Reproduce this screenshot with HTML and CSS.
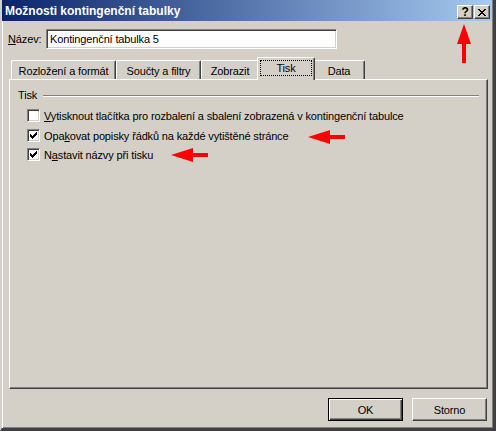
FILE: index.html
```html
<!DOCTYPE html>
<html lang="cs">
    <head>
        <meta charset="UTF-8">
        <meta name="viewport" content="width=device-width, initial-scale=1.0">
        <title>Možnosti kontingenční tabulky</title>
        <link rel="stylesheet" href="styles.css">
    </head>
    <body>

        <div class="window">
            <!-- Title Bar -->
            <div class="titlebar">
                <span class="title">Možnosti kontingenční tabulky</span>
                <div class="caption-buttons">
                    <div class="caption-btn help">?</div>
                    <div class="caption-btn close">
                        <svg width="8" height="7" viewBox="0 0 8 7" shape-rendering="crispEdges">
                            <path d="M0 0h2v1H0z M6 0h2v1H6z M1 1h2v1H1z M5 1h2v1H5z M2 2h4v1H2z M3 3h2v1H3z M2 4h4v1H2z M1 5h2v1H1z M5 5h2v1H5z M0 6h2v1H0z M6 6h2v1H6z" fill="#000"/>
                        </svg>
                    </div>
                </div>
            </div>

            <div class="content">
                <!-- Name -->
                <div class="name-row">
                    <span class="name-label"><u>N</u>ázev:</span>
                    <div class="textbox">Kontingenční tabulka 5</div>
                </div>

                <!-- Tabs -->
                <div class="tabs">
                    <div class="tab tab-layout">Rozložení a formát</div>
                    <div class="tab tab-totals">Součty a filtry</div>
                    <div class="tab tab-display">Zobrazit</div>
                    <div class="tab tab-print active"><span class="focus">Tisk</span></div>
                    <div class="tab tab-data">Data</div>
                </div>

                <div class="panel">
                    <div class="group-title">
                        <span>Tisk</span>
                        <div class="group-line"></div>
                    </div>

                    <div class="option">
                        <span class="checkbox"></span>
                        <span class="option-text"><u>V</u>ytisknout tlačítka pro rozbalení a sbalení zobrazená v kontingenční tabulce</span>
                    </div>
                    <div class="option">
                        <span class="checkbox checked">
                            <svg width="9" height="9" viewBox="0 0 9 9" shape-rendering="crispEdges"><path d="M1 3h1v3H1z M2 4h1v3H2z M3 5h1v3H3z M4 4h1v3H4z M5 3h1v3H5z M6 2h1v3H6z M7 1h1v3H7z" fill="#000"/></svg>
                        </span>
                        <span class="option-text">Opa<u>k</u>ovat popisky řádků na každé vytištěné stránce</span>
                    </div>
                    <div class="option">
                        <span class="checkbox checked">
                            <svg width="9" height="9" viewBox="0 0 9 9" shape-rendering="crispEdges"><path d="M1 3h1v3H1z M2 4h1v3H2z M3 5h1v3H3z M4 4h1v3H4z M5 3h1v3H5z M6 2h1v3H6z M7 1h1v3H7z" fill="#000"/></svg>
                        </span>
                        <span class="option-text">N<u>a</u>stavit názvy při tisku</span>
                    </div>
                </div>

                <!-- Dialog Buttons -->
                <div class="dialog-buttons">
                    <div class="button default">OK</div>
                    <div class="button">Storno</div>
                </div>
            </div>
        </div>

        <!-- Red annotation arrows -->
        <svg class="annotations" width="496" height="431" viewBox="0 0 496 431">
            <polygon points="464,24 471,44 466,44 466,63 462,63 462,44 457,44" fill="#FF0000"/>
            <polygon points="308,137 330,130 330,135 345,135 345,139 330,139 330,144" fill="#FF0000"/>
            <polygon points="171,155 193,148 193,153 208,153 208,157 193,157 193,162" fill="#FF0000"/>
        </svg>

    </body>
</html>
```

FILE: styles.css
```css
/* Page */
body {
  margin: 0;
  font-family: "Liberation Sans", Arial, sans-serif;
  font-size: 11px;
  letter-spacing: -0.14px;
  color: #000;
}

/* Window frame */
.window {
  width: 496px;
  height: 431px;
  box-sizing: border-box;
  background-color: #D4D0C8;
  border-left: 2px solid #D4D0C8;
  border-right: 3px solid #404040;
  border-bottom: 3px solid #404040;
  box-shadow: inset 1px 0 0 #FFFFFF, inset -1px -1px 0 #808080;
  display: flex;
  flex-direction: column;
}

/* Title Bar */
.titlebar {
  height: 21px;
  margin-right: 1px;
  display: flex;
  align-items: center;
  justify-content: space-between;
  background: linear-gradient(to right, #0A246A, #A6CAF0);
}

.title {
  color: white;
  font-weight: bold;
  font-size: 12px;
  letter-spacing: 0;
  padding-left: 3px;
  padding-top: 1px;
}

.caption-buttons {
  display: flex;
  margin-right: 2px;
  margin-top: 3px;
  gap: 1px;
}

.caption-btn {
  width: 16px;
  height: 14px;
  box-sizing: border-box;
  background-color: #D4D0C8;
  border-top: 1px solid #FFFFFF;
  border-left: 1px solid #FFFFFF;
  border-right: 1px solid #404040;
  border-bottom: 1px solid #404040;
  box-shadow: inset -1px -1px 0 #808080;
  display: flex;
  align-items: center;
  justify-content: center;
}

.caption-btn.help {
  font-weight: bold;
  font-size: 12px;
  line-height: 12px;
}

.caption-btn.close svg {
  margin-right: 1px;
}

/* Content */
.content {
  flex: 1;
  padding: 8px 5px 7px 6px;
  display: flex;
  flex-direction: column;
}

.name-row {
  display: flex;
  align-items: center;
  height: 20px;
}

.name-label {
  width: 38px;
}

.textbox {
  width: 291px;
  height: 20px;
  box-sizing: border-box;
  background-color: white;
  border-top: 1px solid #808080;
  border-left: 1px solid #808080;
  border-right: 1px solid #FFFFFF;
  border-bottom: 1px solid #FFFFFF;
  box-shadow: inset 1px 1px 0 #404040, inset -1px -1px 0 #D4D0C8;
  padding: 3px 0 0 3px;
}

/* Tabs */
.tabs {
  display: flex;
  align-items: flex-end;
  height: 22px;
  margin-top: 8px;
  margin-left: 1px;
  padding-left: 2px;
}

.tab {
  height: 19px;
  box-sizing: border-box;
  border-top: 1px solid #FFFFFF;
  border-left: 1px solid #FFFFFF;
  border-right: 1px solid #404040;
  box-shadow: inset -1px 0 0 #808080;
  border-radius: 2px 2px 0 0;
  display: flex;
  align-items: center;
  justify-content: center;
  padding-top: 1px;
}

.tab-layout { width: 105px; }
.tab-totals { width: 85px; }
.tab-display { width: 58px; }
.tab-print { width: 54px; }
.tab-data { width: 52px; }

.tab.active {
  width: 58px;
  height: 23px;
  margin: 0 -2px -1px;
  position: relative;
  z-index: 1;
  background-color: #D4D0C8;
  padding-top: 0;
  padding-bottom: 2px;
}

.focus {
  border: 1px dotted #000;
  padding: 1px 15px 1px 15px;
}

/* Tab Panel */
.panel {
  height: 310px;
  box-sizing: border-box;
  margin-left: 1px;
  border-top: 1px solid #FFFFFF;
  border-left: 1px solid #FFFFFF;
  border-right: 1px solid #404040;
  border-bottom: 1px solid #404040;
  box-shadow: inset -1px -1px 0 #808080;
  padding: 9px 8px 0 8px;
}

.group-title {
  display: flex;
  align-items: flex-start;
  height: 13px;
  line-height: 13px;
}

.group-line {
  flex: 1;
  height: 1px;
  margin: 6px 0 0 6px;
  background-color: #808080;
  border-bottom: 1px solid #FFFFFF;
}

.option {
  display: flex;
  align-items: center;
  height: 19px;
  margin-left: 9px;
}

.group-title + .option {
  margin-top: 4px;
  margin-bottom: 1px;
}

/* Checkbox */
.checkbox {
  width: 13px;
  height: 13px;
  box-sizing: border-box;
  background-color: white;
  border-top: 1px solid #808080;
  border-left: 1px solid #808080;
  border-right: 1px solid #FFFFFF;
  border-bottom: 1px solid #FFFFFF;
  box-shadow: inset 1px 1px 0 #404040, inset -1px -1px 0 #D4D0C8;
  padding: 1px;
  margin-right: 4px;
}

.checkbox svg {
  display: block;
}

/* Dialog Buttons */
.dialog-buttons {
  display: flex;
  justify-content: flex-end;
  gap: 9px;
  margin-top: 9px;
  margin-right: 1px;
}

.button {
  width: 75px;
  height: 23px;
  box-sizing: border-box;
  border-top: 1px solid #FFFFFF;
  border-left: 1px solid #FFFFFF;
  border-right: 1px solid #404040;
  border-bottom: 1px solid #404040;
  box-shadow: inset -1px -1px 0 #808080;
  display: flex;
  align-items: center;
  justify-content: center;
}

.button.default {
  border: 1px solid #000;
  box-shadow: inset 1px 1px 0 #FFFFFF, inset -1px -1px 0 #404040, inset -2px -2px 0 #808080;
}

/* Annotations */
.annotations {
  position: absolute;
  left: 0;
  top: 0;
  pointer-events: none;
}
```
